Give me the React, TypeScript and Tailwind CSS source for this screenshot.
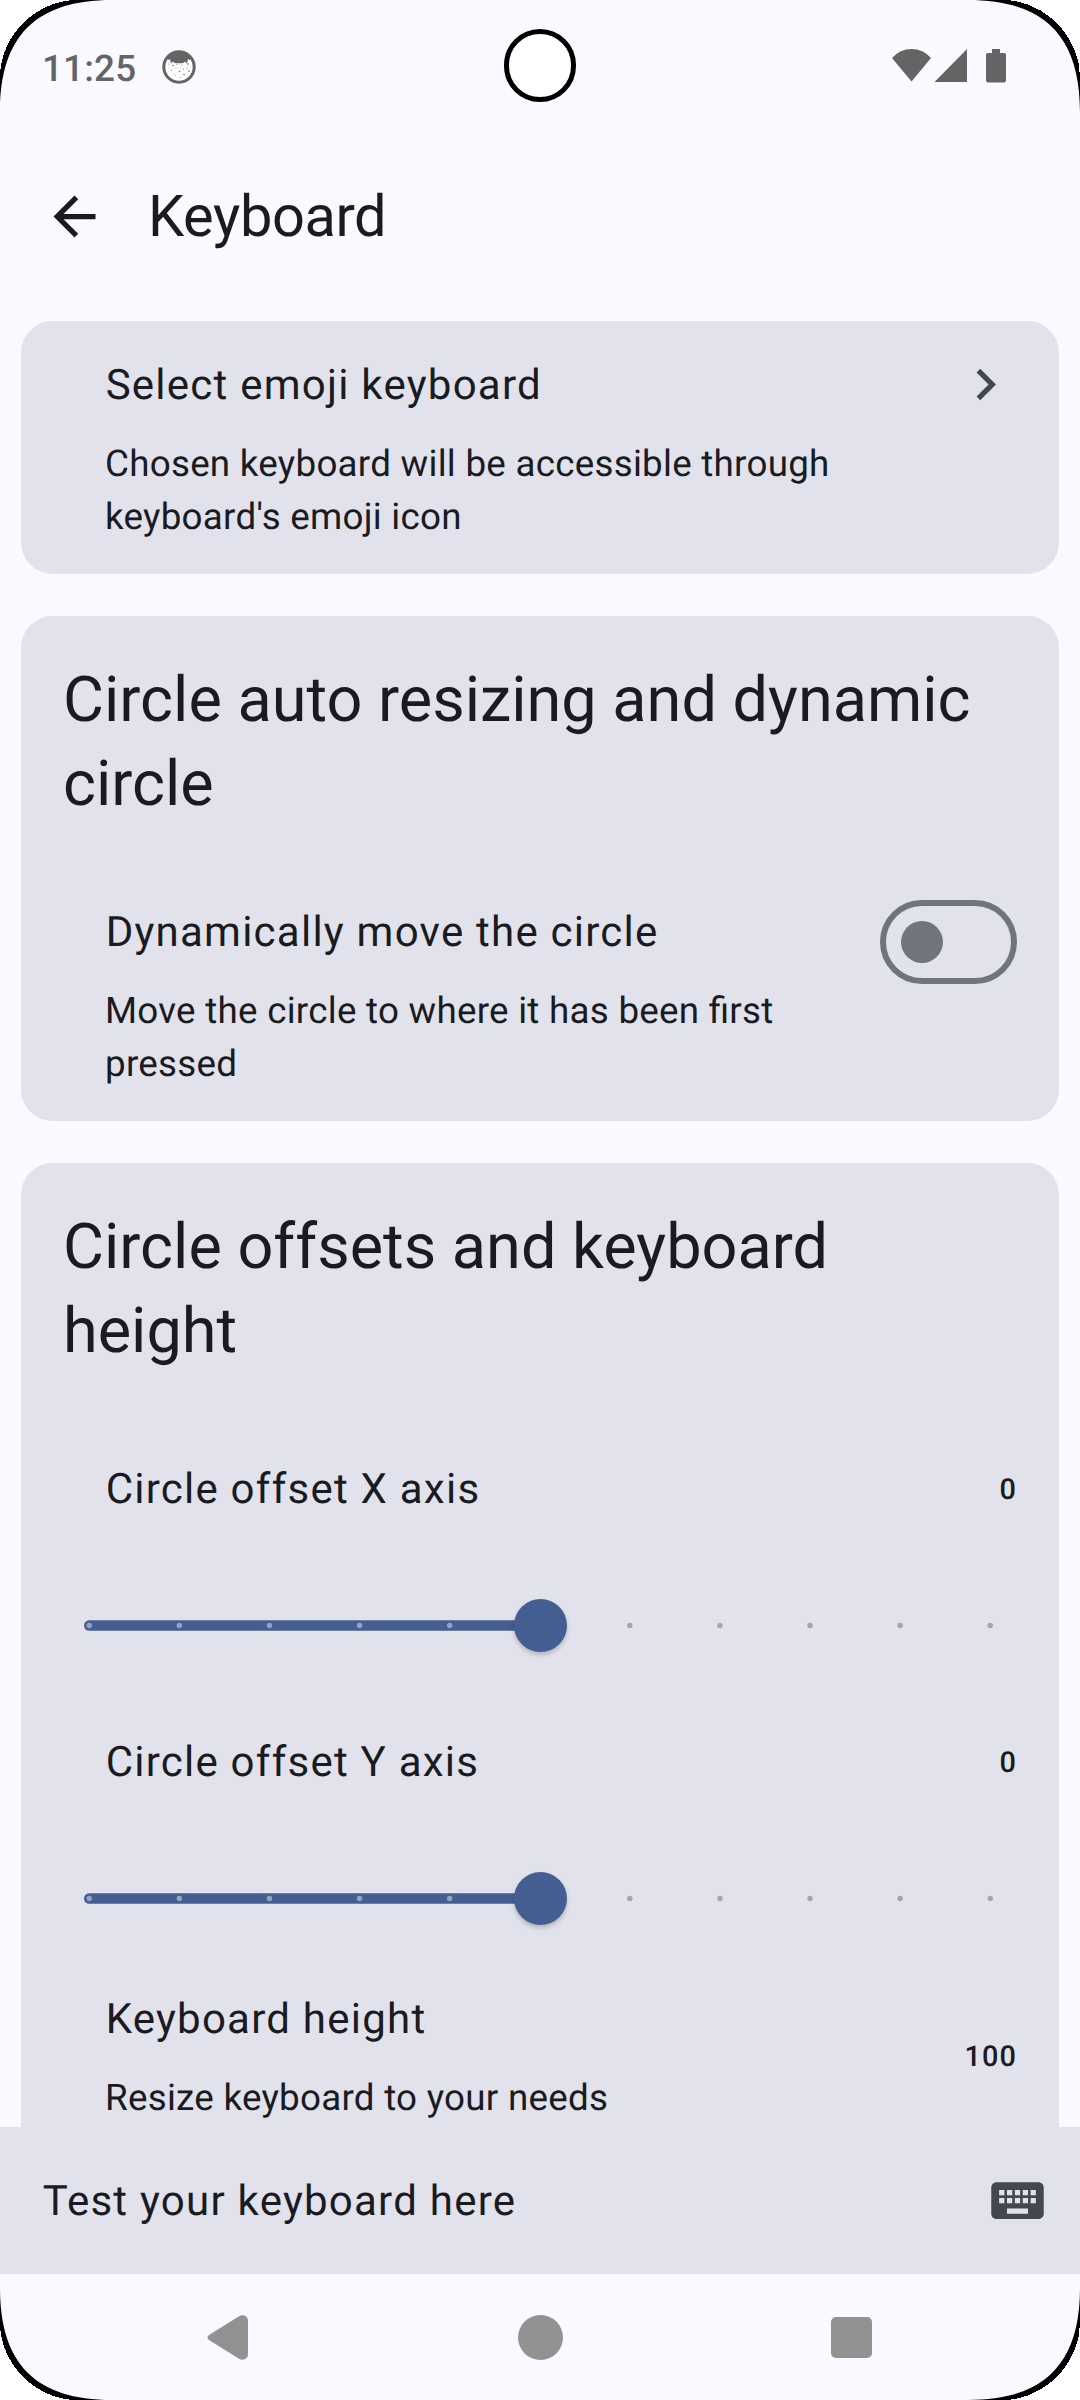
import React from "react";

const CORNER_EDGE = "M0 0H112C36 0 0 36 0 112Z";
const CORNER_OUT = "M0 0H77C36 0 0 36 0 77Z";

function Corner({ className }: { className: string }) {
  return (
    <svg className={"absolute h-28 w-28 " + className} viewBox="0 0 112 112">
      <path d={CORNER_EDGE} fill="#000" />
      <path d={CORNER_OUT} fill="#fff" shapeRendering="crispEdges" />
    </svg>
  );
}

const FRECKLES = [
  [7, 14], [11, 15.5], [15, 14.5], [20, 15], [26, 14], [9.5, 20], [14, 18], [17.5, 21.5],
  [21.5, 19], [25, 18], [27, 21], [13, 25], [18, 27], [22, 24.5],
];

function StatusBar() {
  return (
    <header className="flex h-[132px] items-start justify-between pl-[42px] pr-[73px] pt-[46px] text-[#646464]">
      <div className="flex items-start">
        <span className="w-[120px] pt-px text-[36.75px] font-medium leading-[43px] tracking-[0.2px]">11:25</span>
        <svg className="mt-[4px] h-[34px] w-[34px]" viewBox="0 0 34 34">
          <circle cx="17" cy="17" r="15.2" fill="#fff" stroke="currentColor" strokeWidth="3" />
          <path d="M4.5 8Q9 1.5 17 1.5T29.5 8L27.5 10L26 9L25 13.5L23 11.5Q22 13.2 20 13.2H14Q12 13.2 11 11.5L9 13.5L8 9L6.5 10Z" fill="currentColor" />
          {FRECKLES.map(([x, y], i) => (
            <circle key={i} cx={x} cy={y} r={i % 3 === 1 ? 0.8 : 0.5} fill="currentColor" />
          ))}
        </svg>
      </div>
      <div className="flex pt-[3px]">
        <svg className="h-[34px] w-[115px]" viewBox="0 0 115 34" fill="currentColor">
          <path d="M0 9Q8 0 19.5 0T39 9L19.5 32.5Z" />
          <path d="M75 0V33H42.5Z" />
          <path d="M100 0h8v4h4q2 0 2 1.5v26q0 2-2 2h-16q-2 0-2-2V5.5q0-1.5 2-1.5h4z" />
        </svg>
      </div>
    </header>
  );
}

const CARD = "mx-[21px] rounded-[31.5px] bg-[#e2e2ec]";

function Title({ children }: { children: React.ReactNode }) {
  return <div className="-mb-px pl-[0.66px] pt-px text-[42px] leading-[63px] tracking-[1.24px]">{children}</div>;
}

function Desc({ children }: { children: React.ReactNode }) {
  return (
    <div className="mt-[21px] text-[36.75px] leading-[53px] tracking-[0.26px] [font-feature-settings:'liga'_1]">
      {children}
    </div>
  );
}

function Heading({ children }: { children: React.ReactNode }) {
  return <h2 className="px-[42px] pb-[41px] pt-[43px] text-[63px] leading-[84px]">{children}</h2>;
}

function Value({ children }: { children: React.ReactNode }) {
  return <div className="pt-[3px] text-[28.875px] font-medium leading-[42px] tracking-[1.1px]">{children}</div>;
}

function Slider() {
  const ticks = Array.from({ length: 11 }, (_, i) => i);
  return (
    <svg className="ml-[63px] block h-[126px] w-[912px]" viewBox="0 0 912 126">
      <rect x="0" y="58.25" width="456" height="10.5" rx="5.25" fill="#455e91" />
      {ticks.map((i) => (
        <circle key={i} cx={5.25 + i * 90.1} cy="63.5" r="2.7" fill={i < 5 ? "#94a2c4" : "#a4a4af"} />
      ))}
      <circle cx="456.5" cy="63.5" r="26.5" fill="#455e91" className="drop-shadow-[0_3px_2px_rgba(0,0,0,0.2)]" />
    </svg>
  );
}

export default function App() {
  return (
    <div className="relative flex h-[2400px] w-[1080px] flex-col overflow-hidden bg-[#faf9ff] font-['Roboto',sans-serif] text-[#1a1b20] [text-rendering:geometricPrecision]">
      <StatusBar />
      <div className="flex h-[168px] shrink-0 items-center pl-[43px]">
        <svg className="h-[63px] w-[63px]" viewBox="0 0 24 24" fill="currentColor">
          <path d="M20 11H7.83l5.59-5.59L12 4l-8 8 8 8 1.41-1.41L7.83 13H20v-2z" />
        </svg>
        <h1 className="ml-[42px] pt-[4px] text-[57.75px] leading-[73.5px] tracking-[-0.4px]">Keyboard</h1>
      </div>

      <main className="h-[1827px] shrink-0 overflow-hidden pt-[21px]">
        <section className={CARD + " mb-[42px] flex h-[253px] pl-[84px] pr-[42px] pt-[31.5px]"}>
          <div className="w-[807px]">
            <Title>Select emoji keyboard</Title>
            <Desc>Chosen keyboard will be accessible through<br />keyboard's emoji icon</Desc>
          </div>
          <svg className="ml-[42px] h-[63px] w-[63px] shrink-0 text-[#45474f]" viewBox="0 0 24 24" fill="currentColor">
            <path d="M8.59 16.59L13.17 12 8.59 7.41 10 6l6 6-6 6z" />
          </svg>
        </section>

        <section className={CARD + " mb-[42px] h-[505px]"}>
          <Heading>Circle auto resizing and dynamic<br />circle</Heading>
          <div className="flex justify-between pl-[84px] pr-[42px] pt-[31.5px]">
            <div>
              <Title>Dynamically move the circle</Title>
              <Desc>Move the circle to where it has been first<br />pressed</Desc>
            </div>
            <div className="flex h-[84px] w-[137px] items-center rounded-full border-[6px] border-[#72747d] pl-[15px]">
              <div className="h-[42px] w-[42px] rounded-full bg-[#72747d]" />
            </div>
          </div>
        </section>

        <section className={CARD + " h-[1100px]"}>
          <Heading>Circle offsets and keyboard<br />height</Heading>
          <div className="flex items-center justify-between pb-[42px] pl-[84px] pr-[42px] pt-[42px]">
            <Title>Circle offset X axis</Title>
            <Value>0</Value>
          </div>
          <Slider />
          <div className="flex items-center justify-between pb-[42px] pl-[84px] pr-[42px] pt-[42px]">
            <Title>Circle offset Y axis</Title>
            <Value>0</Value>
          </div>
          <Slider />
          <div className="flex items-center justify-between pl-[84px] pr-[42px] pt-[26px]">
            <div>
              <Title>Keyboard height</Title>
              <Desc>Resize keyboard to your needs</Desc>
            </div>
            <Value>100</Value>
          </div>
        </section>
      </main>

      <div className="flex h-[147px] shrink-0 items-center justify-between bg-[#e2e2ec] pl-[42px] pr-[31px]">
        <Title>Test your keyboard here</Title>
        <svg className="h-[63px] w-[63px] text-[#45474f]" viewBox="0 0 24 24" fill="currentColor">
          <path d="M20 5H4c-1.1 0-1.99.9-1.99 2L2 17c0 1.1.9 2 2 2h16c1.1 0 2-.9 2-2V7c0-1.1-.9-2-2-2zm-9 3h2v2h-2V8zm0 3h2v2h-2v-2zM8 8h2v2H8V8zm0 3h2v2H8v-2zm-1 2H5v-2h2v2zm0-3H5V8h2v2zm9 7H8v-2h8v2zm0-4h-2v-2h2v2zm0-3h-2V8h2v2zm3 3h-2v-2h2v2zm0-3h-2V8h2v2z" />
        </svg>
      </div>

      <nav className="flex h-[126px] items-center justify-between pl-[207px] pr-[208px] text-[#929292]">
        <svg className="h-[45px] w-[41px]" viewBox="0 0 41 45" fill="currentColor">
          <path d="M2 20L32 1.2C36-1 41 1 41 6V39C41 44 36 46 32 43.8L2 25Q-1 22.5 2 20Z" />
        </svg>
        <div className="ml-[2px] h-[45px] w-[45px] rounded-full bg-[#929292]" />
        <div className="h-[41px] w-[41px] rounded-[5px] bg-[#929292]" />
      </nav>

      <div className="absolute left-[503.5px] top-[29px] h-[72.5px] w-[72.5px] rounded-full border-[5px] border-black bg-white" />
      <Corner className="left-0 top-0" />
      <Corner className="right-0 top-0 -scale-x-100" />
      <Corner className="bottom-0 left-0 -scale-y-100" />
      <Corner className="bottom-0 right-0 -scale-100" />
    </div>
  );
}
